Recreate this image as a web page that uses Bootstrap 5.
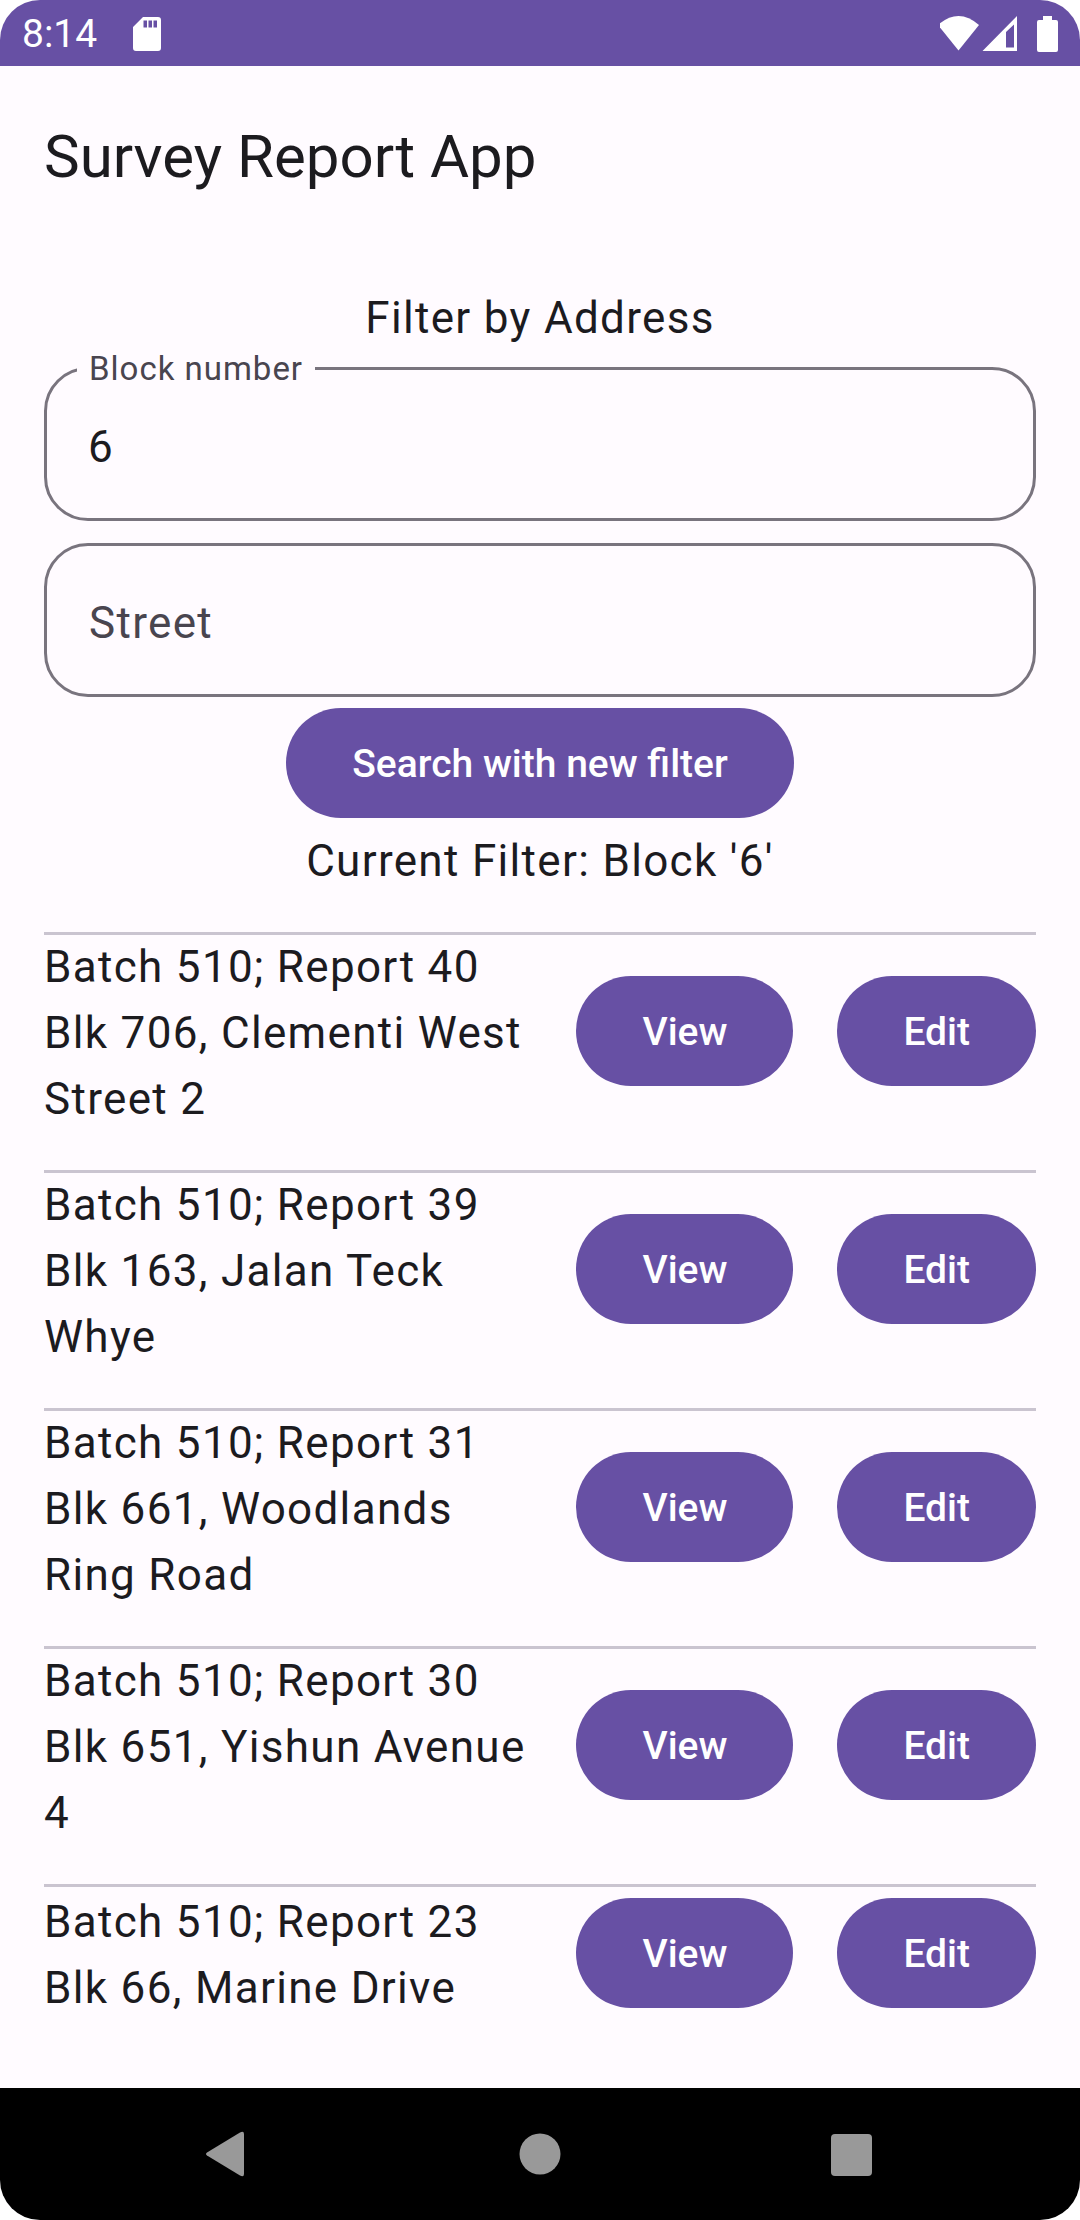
<!DOCTYPE html>
<html lang="en">
<head>
<meta charset="utf-8">
<meta name="viewport" content="width=device-width, initial-scale=1">
<title>Survey Report App</title>
<link href="https://cdn.jsdelivr.net/npm/bootstrap@5.3.0/dist/css/bootstrap.min.css" rel="stylesheet">
<style>
  :root { --brand: #6750a4; --surface: #fffbff; --ink: #1c1b1f; --ink-soft: #49454f; --outline: #79747e; --rule: #cac4d0; }
  body { background: #fff; color: var(--ink); font-family: Roboto, "Liberation Sans", sans-serif; font-size: 44px; line-height: 66px; }
  .app-shell { background: var(--surface); border-radius: 40px; }
  .status-strip { background: var(--brand); color: #fff; height: 66px; padding: 2px 20px 0 22px; gap: 36px; font-size: 39px; line-height: 64px; }
  .app-title { font-size: 60px; line-height: 78px; padding: 52px 0 46px; }
  .page-pad { padding-left: 44px; padding-right: 44px; }
  .body-text, .field-input, .field-label { letter-spacing: .03em; }
  .filter-form { margin-top: 43px; }
  .filter-form .body-text { margin-bottom: 16px; }
  .field-input { height: 154px; padding: 6px 41px 0; border: 3px solid var(--outline); border-radius: 44px; background: transparent; color: var(--ink); font-size: 44px; line-height: 66px; }
  .field-input:focus { background: transparent; border-color: var(--brand); box-shadow: none; }
  /* The label sits in the outline once the field has a value, and rests inside it while empty. */
  .field-label { position: absolute; left: 33px; top: -18px; padding: 0 12px; background: var(--surface); color: var(--ink-soft); font-size: 33px; line-height: 40px; }
  .field-input:placeholder-shown:not(:focus) + .field-label { top: 47px; font-size: 44px; line-height: 66px; pointer-events: none; }
  .field-stack { gap: 22px; margin-bottom: 11px; }
  .btn-brand { --bs-btn-color: #fff; --bs-btn-bg: var(--brand); --bs-btn-hover-color: #fff; --bs-btn-hover-bg: #5a4494; --bs-btn-active-color: #fff; --bs-btn-active-bg: #4f3b85; --bs-btn-border-width: 0; --bs-btn-font-weight: 500; --bs-btn-font-size: 39px; --bs-btn-line-height: 54px; padding: 29px 66px 27px; }
  .current-filter { margin: 10px 0 38px; }
  .report-row { border-top: 3px solid var(--rule); padding-bottom: 43px; gap: 44px; }
  .report-text { margin: -1px 0 -5px; }
  .report-actions { min-height: 132px; gap: 44px; }
  .nav-strip { background: #000; height: 132px; padding: 0 67px; }
</style>
</head>
<body>
<div class="app-shell d-flex flex-column min-vh-100 overflow-hidden">
  <div class="status-strip d-flex align-items-center">
    <span>8:14</span>
    <svg width="28" height="36" viewBox="0 0 28 36" fill="#fff" role="img" aria-label="Memory card">
      <path fill-rule="evenodd" d="M10 1H25Q28 1 28 4V32Q28 35 25 35H3Q0 35 0 32V11ZM10.500 4.500V11.500H14V4.500ZM15.500 4.500V11.500H19V4.500ZM20.500 4.500V11.500H24V4.500Z"/>
    </svg>
    <svg class="ms-auto" width="120" height="36" viewBox="0 0 120 36" fill="#fff" role="img" aria-label="Wi-Fi, signal, battery">
      <path d="M-2 9Q18.500-9 39 9L18.500 34.500Z"/>
      <path fill-rule="evenodd" d="M42.500 35L77 0V35ZM66 31.500H74V8.500L66 16Z"/>
      <path d="M103 0h9v4h4q2 0 2 2v28q0 2-2 2h-17q-2 0-2-2V6q0-2 2-2h4Z"/>
    </svg>
  </div>

  <header class="page-pad">
    <h1 class="app-title fw-normal mb-0">Survey Report App</h1>
  </header>

  <main class="page-pad flex-grow-1">
    <form class="filter-form text-center" onsubmit="return false">
      <p class="body-text">Filter by Address</p>
      <div class="field-stack d-flex flex-column">
        <div class="position-relative">
          <input class="form-control field-input" id="block" type="text" value="6" placeholder=" ">
          <label class="field-label" for="block">Block number</label>
        </div>
        <div class="position-relative">
          <input class="form-control field-input" id="street" type="text" placeholder=" ">
          <label class="field-label" for="street">Street</label>
        </div>
      </div>
      <button class="btn btn-brand rounded-pill d-block mx-auto" type="submit">Search with new filter</button>
    </form>
    <p class="body-text current-filter text-center">Current Filter: Block '6'</p>

    <section aria-label="Reports">
      <article class="report-row d-flex align-items-center">
        <div class="report-text body-text flex-fill">Batch 510; Report 40<br>Blk 706, Clementi West Street 2</div>
        <div class="report-actions d-flex align-items-center"><button class="btn btn-brand rounded-pill" type="button">View</button><button class="btn btn-brand rounded-pill" type="button">Edit</button></div>
      </article>
      <article class="report-row d-flex align-items-center">
        <div class="report-text body-text flex-fill">Batch 510; Report 39<br>Blk 163, Jalan Teck Whye</div>
        <div class="report-actions d-flex align-items-center"><button class="btn btn-brand rounded-pill" type="button">View</button><button class="btn btn-brand rounded-pill" type="button">Edit</button></div>
      </article>
      <article class="report-row d-flex align-items-center">
        <div class="report-text body-text flex-fill">Batch 510; Report 31<br>Blk 661, Woodlands Ring Road</div>
        <div class="report-actions d-flex align-items-center"><button class="btn btn-brand rounded-pill" type="button">View</button><button class="btn btn-brand rounded-pill" type="button">Edit</button></div>
      </article>
      <article class="report-row d-flex align-items-center">
        <div class="report-text body-text flex-fill">Batch 510; Report 30<br>Blk 651, Yishun Avenue 4</div>
        <div class="report-actions d-flex align-items-center"><button class="btn btn-brand rounded-pill" type="button">View</button><button class="btn btn-brand rounded-pill" type="button">Edit</button></div>
      </article>
      <article class="report-row d-flex align-items-center">
        <div class="report-text body-text flex-fill">Batch 510; Report 23<br>Blk 66, Marine Drive</div>
        <div class="report-actions d-flex align-items-center"><button class="btn btn-brand rounded-pill" type="button">View</button><button class="btn btn-brand rounded-pill" type="button">Edit</button></div>
      </article>
    </section>
  </main>

  <nav class="nav-strip d-flex" aria-label="System">
    <button class="btn border-0 p-0 flex-fill d-flex align-items-center justify-content-center" type="button" aria-label="Back">
      <svg width="48" height="48" viewBox="0 0 48 48" fill="#999"><path d="M6 22.500L39 2.500Q43 0.500 43 4V44Q43 47.500 39 45.500L6 25.500Q4 24 6 22.500Z"/></svg>
    </button>
    <button class="btn border-0 p-0 flex-fill d-flex align-items-center justify-content-center" type="button" aria-label="Home">
      <svg width="48" height="48" viewBox="0 0 48 48" fill="#999"><circle cx="24" cy="24" r="20.500"/></svg>
    </button>
    <button class="btn border-0 p-0 flex-fill d-flex align-items-center justify-content-center" type="button" aria-label="Recent apps">
      <svg width="48" height="48" viewBox="0 0 48 48" fill="#999"><rect y="4" width="41" height="42" rx="4"/></svg>
    </button>
  </nav>
</div>
<script src="https://cdn.jsdelivr.net/npm/bootstrap@5.3.0/dist/js/bootstrap.bundle.min.js"></script>
</body>
</html>
